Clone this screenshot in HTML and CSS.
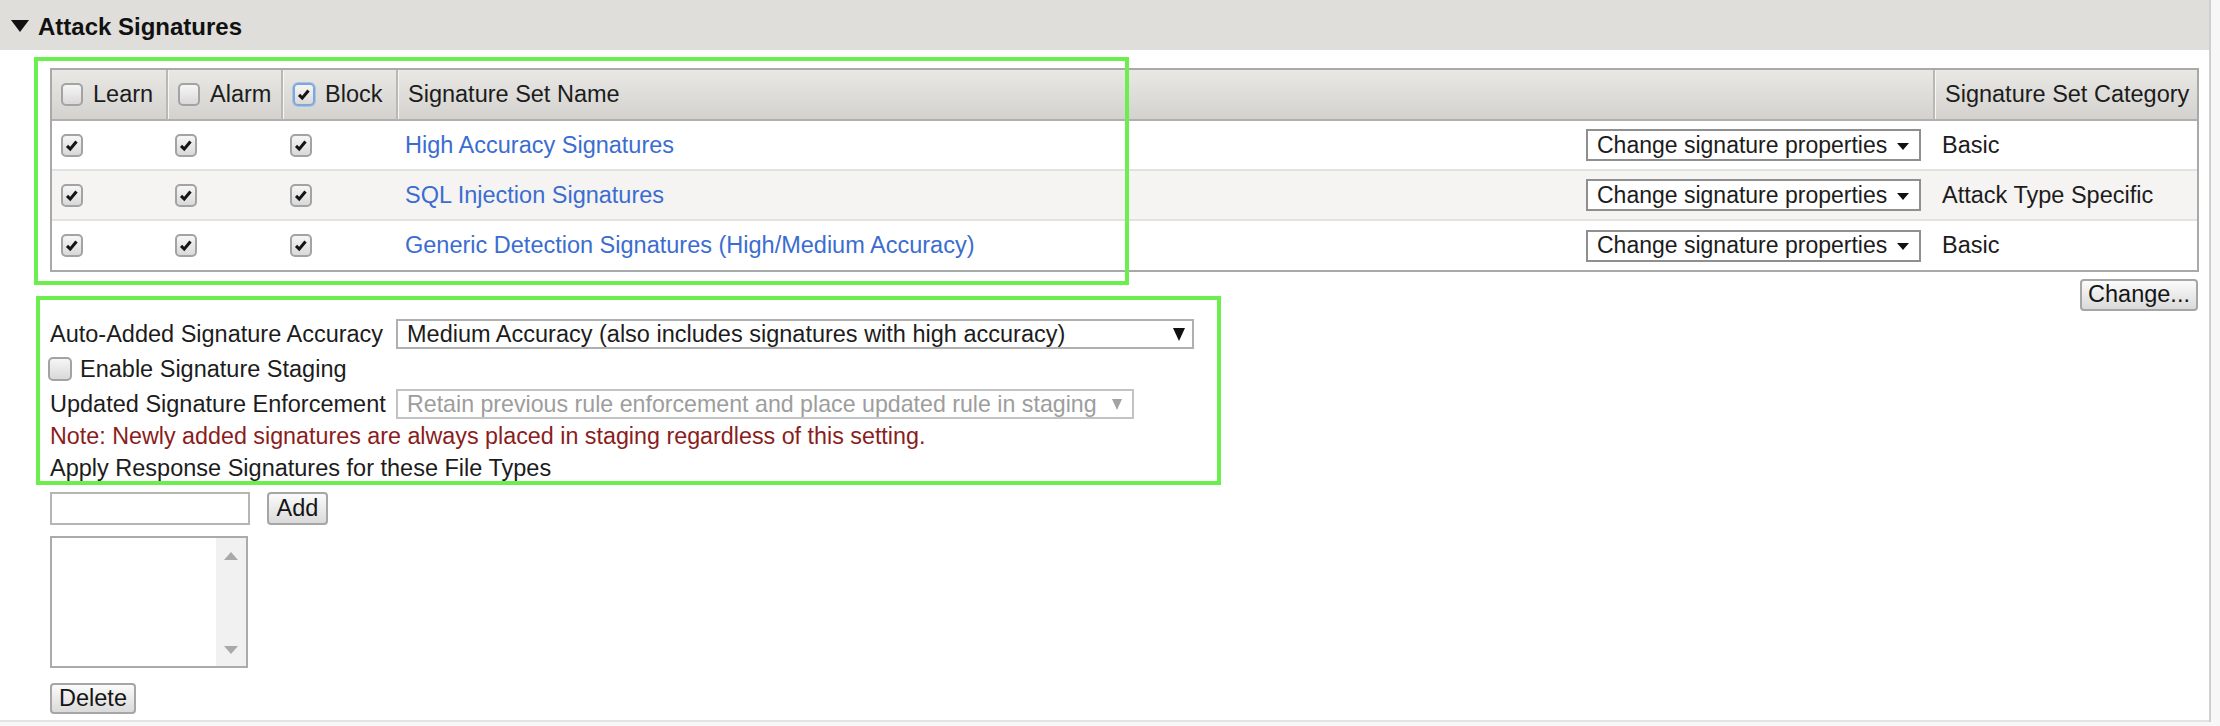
FILE: index.html
```html
<!DOCTYPE html>
<html lang="en">
<head>
<meta charset="utf-8">
<title>Attack Signatures</title>
<link rel="stylesheet" href="styles.css">
</head>
<body>
<div class="page">
  <div class="section-head">
    <span class="caret"></span>
    <span class="title">Attack Signatures</span>
  </div>
  <div class="section-body">
    <table class="sig-table">
      <colgroup>
        <col class="c-learn"><col class="c-alarm"><col class="c-block"><col class="c-name"><col class="c-cat">
      </colgroup>
      <thead>
        <tr>
          <th><span class="cb"></span>Learn</th>
          <th><span class="cb"></span>Alarm</th>
          <th><span class="cb cb-focus"><svg class="tick" viewBox="0 0 20 20"><path d="M4.5 10.5 L8 14 L15 5.5"/></svg></span>Block</th>
          <th>Signature Set Name</th>
          <th>Signature Set Category</th>
        </tr>
      </thead>
      <tbody>
        <tr>
          <td><span class="cb"><svg class="tick" viewBox="0 0 20 20"><path d="M4.5 10.5 L8 14 L15 5.5"/></svg></span></td>
          <td><span class="cb"><svg class="tick" viewBox="0 0 20 20"><path d="M4.5 10.5 L8 14 L15 5.5"/></svg></span></td>
          <td><span class="cb"><svg class="tick" viewBox="0 0 20 20"><path d="M4.5 10.5 L8 14 L15 5.5"/></svg></span></td>
          <td><div class="name-cell"><a class="set-link" href="#">High Accuracy Signatures</a><div class="dropdown dd-props"><span>Change signature properties</span><span class="arrow-sm"></span></div></div></td>
          <td>Basic</td>
        </tr>
        <tr>
          <td><span class="cb"><svg class="tick" viewBox="0 0 20 20"><path d="M4.5 10.5 L8 14 L15 5.5"/></svg></span></td>
          <td><span class="cb"><svg class="tick" viewBox="0 0 20 20"><path d="M4.5 10.5 L8 14 L15 5.5"/></svg></span></td>
          <td><span class="cb"><svg class="tick" viewBox="0 0 20 20"><path d="M4.5 10.5 L8 14 L15 5.5"/></svg></span></td>
          <td><div class="name-cell"><a class="set-link" href="#">SQL Injection Signatures</a><div class="dropdown dd-props"><span>Change signature properties</span><span class="arrow-sm"></span></div></div></td>
          <td>Attack Type Specific</td>
        </tr>
        <tr>
          <td><span class="cb"><svg class="tick" viewBox="0 0 20 20"><path d="M4.5 10.5 L8 14 L15 5.5"/></svg></span></td>
          <td><span class="cb"><svg class="tick" viewBox="0 0 20 20"><path d="M4.5 10.5 L8 14 L15 5.5"/></svg></span></td>
          <td><span class="cb"><svg class="tick" viewBox="0 0 20 20"><path d="M4.5 10.5 L8 14 L15 5.5"/></svg></span></td>
          <td><div class="name-cell"><a class="set-link" href="#">Generic Detection Signatures (High/Medium Accuracy)</a><div class="dropdown dd-props"><span>Change signature properties</span><span class="arrow-sm"></span></div></div></td>
          <td>Basic</td>
        </tr>
      </tbody>
    </table>

    <div class="change-row"><button class="btn btn-change" type="button">Change...</button></div>

    <div class="settings">
      <div class="set-row row-accuracy">
        <span class="set-label">Auto-Added Signature Accuracy</span>
        <div class="dropdown dd-accuracy"><span>Medium Accuracy (also includes signatures with high accuracy)</span><span class="arrow-lg"></span></div>
      </div>
      <div class="set-row row-staging">
        <span class="cb cb-big"></span><span>Enable Signature Staging</span>
      </div>
      <div class="set-row row-enforce">
        <span class="set-label">Updated Signature Enforcement</span>
        <div class="dropdown dd-enforce"><span>Retain previous rule enforcement and place updated rule in staging</span><span class="arrow-dis"></span></div>
      </div>
      <div class="note">Note: Newly added signatures are always placed in staging regardless of this setting.</div>
      <div class="set-row row-apply">Apply Response Signatures for these File Types</div>
    </div>

    <div class="filetypes">
      <div class="add-row">
        <input class="text-in" type="text">
        <button class="btn btn-add" type="button">Add</button>
      </div>
      <div class="listbox">
        <div class="list-scroll">
          <span class="sc-up"></span>
          <span class="sc-down"></span>
        </div>
      </div>
      <button class="btn btn-delete" type="button">Delete</button>
    </div>
  </div>

  <div class="annot annot-1"></div>
  <div class="annot annot-2"></div>
</div>
</body>
</html>
```

FILE: styles.css
```css
* { box-sizing: border-box; }

html, body {
  margin: 0;
  padding: 0;
}

body {
  width: 2220px;
  height: 726px;
  overflow: hidden;
  font-family: "Liberation Sans", Arial, sans-serif;
  font-size: 23.5px;
  color: #1c1c1c;
  background: #f7f7f7;
}

.page {
  position: relative;
  width: 2211px;
  background: #ffffff;
  border-right: 2px solid #cfcfcf;
}

/* section header */
.section-head {
  height: 50px;
  background: #dfdedb;
  display: flex;
  align-items: center;
  padding-left: 11px;
  padding-top: 3px;
}

.caret {
  width: 0;
  height: 0;
  border-left: 9px solid transparent;
  border-right: 9px solid transparent;
  border-top: 12px solid #111;
  margin-right: 9px;
  margin-top: -2px;
}

.title {
  font-weight: bold;
  font-size: 24px;
  color: #111;
}

.section-body {
  padding: 18px 10px 6px 50px;
  border-bottom: 2px solid #e3e3e3;
}

/* table */
.sig-table {
  width: 100%;
  table-layout: fixed;
  border-collapse: separate;
  border-spacing: 0;
  border: 2px solid #a9a9a9;
}

.c-learn { width: 114px; }
.c-alarm { width: 115px; }
.c-block { width: 115px; }
.c-name { width: 1537px; }

.sig-table th {
  height: 51px;
  padding: 0 8px 0 10px;
  text-align: left;
  font-weight: normal;
  white-space: nowrap;
  background: linear-gradient(#e9e8e5, #d3d2ce);
  border-left: 2px solid #b9b8b5;
  border-bottom: 2px solid #b0afac;
  box-shadow: inset 1px 0 0 #f6f6f4;
  vertical-align: middle;
}

.sig-table th:first-child {
  border-left: 0;
  padding-left: 9px;
  box-shadow: none;
}

.sig-table td {
  height: 50px;
  padding: 0 10px 0 9px;
  border-bottom: 2px solid #e2e2e0;
  vertical-align: middle;
  white-space: nowrap;
}

.sig-table tbody tr:last-child td { border-bottom: 0; height: 49px; }
.sig-table tbody tr:nth-child(even) td { background: #f5f4f2; }

/* checkboxes */
.cb {
  display: inline-block;
  width: 22px;
  height: 23px;
  border: 2px solid #a3a3a3;
  border-radius: 5px;
  background: linear-gradient(#f6f6f6, #d9d9d9);
  vertical-align: middle;
  position: relative;
  top: -1px;
}

th .cb { margin-right: 10px; }

.cb-focus {
  border-color: #7fa7d9;
  box-shadow: 0 0 0 1px #a9c4e8;
}

.tick {
  display: block;
  width: 18px;
  height: 19px;
}

.tick path {
  fill: none;
  stroke: #141414;
  stroke-width: 3.4;
  stroke-linecap: butt;
  stroke-linejoin: miter;
}

.cb-big {
  width: 24px;
  height: 24px;
  margin-left: -2px;
  margin-right: 8px;
}

/* name cell */
.name-cell {
  display: flex;
  align-items: center;
  justify-content: space-between;
}

.set-link {
  color: #3b6dd1;
  text-decoration: none;
}

/* dropdowns */
.dropdown {
  display: flex;
  align-items: center;
  background: #fff;
  white-space: nowrap;
}

.dd-props {
  width: 335px;
  height: 32px;
  margin-right: 2px;
  border: 2px solid #8f8f8f;
  padding: 0 10px 0 9px;
  font-size: 23px;
  justify-content: space-between;
}

.arrow-sm {
  width: 0;
  height: 0;
  border-left: 6px solid transparent;
  border-right: 6px solid transparent;
  border-top: 7px solid #111;
  margin-top: 2px;
}

.dd-accuracy {
  width: 798px;
  height: 30px;
  border: 2px solid #b0b0b0;
  padding: 0 7px 0 9px;
  justify-content: space-between;
}

.arrow-lg {
  width: 0;
  height: 0;
  border-left: 6px solid transparent;
  border-right: 6px solid transparent;
  border-top: 13px solid #111;
}

.dd-enforce {
  width: 738px;
  height: 30px;
  border: 2px solid #c3c3c3;
  padding: 0 10px 0 9px;
  font-size: 23.2px;
  color: #9d9d9d;
  justify-content: space-between;
}

.arrow-dis {
  width: 0;
  height: 0;
  border-left: 5px solid transparent;
  border-right: 5px solid transparent;
  border-top: 11px solid #a3a3a3;
}

/* change button row */
.change-row {
  display: flex;
  justify-content: flex-end;
  margin-top: 7px;
  padding-right: 1px;
}

.btn {
  font-family: "Liberation Sans", Arial, sans-serif;
  font-size: 23.5px;
  color: #151515;
  background: linear-gradient(#fbfbfb, #dadada);
  border: 2px solid #a6a6a6;
  border-radius: 4px;
  padding: 0;
  line-height: 1;
}

.btn-change { width: 118px; height: 32px; }

/* settings block */
.settings { margin-top: 6px; }

.set-row {
  display: flex;
  align-items: center;
  height: 34px;
}

.row-staging { height: 37px; }
.row-enforce { height: 32px; }

.set-label { width: 346px; flex: none; }

.note {
  color: #8a1d1d;
  font-size: 23.3px;
  line-height: 20px;
  height: 20px;
  margin-top: 6px;
}

.row-apply { margin-top: 5px; }

/* file types */
.filetypes { margin-top: 7px; }

.add-row {
  display: flex;
  gap: 17px;
}

.text-in {
  width: 200px;
  height: 33px;
  border: 2px solid #b5b5b5;
  background: #fff;
  margin: 0;
  font-size: 23px;
}

.btn-add { width: 61px; height: 33px; }

.listbox {
  margin-top: 11px;
  width: 198px;
  height: 132px;
  border: 2px solid #ababab;
  background: #fff;
  display: flex;
  justify-content: flex-end;
}

.list-scroll {
  width: 30px;
  background: #f1f1f1;
  display: flex;
  flex-direction: column;
  align-items: center;
  justify-content: space-between;
  padding: 14px 0 12px;
}

.sc-up {
  width: 0;
  height: 0;
  border-left: 7px solid transparent;
  border-right: 7px solid transparent;
  border-bottom: 8px solid #a9a9a9;
}

.sc-down {
  width: 0;
  height: 0;
  border-left: 7px solid transparent;
  border-right: 7px solid transparent;
  border-top: 8px solid #a9a9a9;
}

.btn-delete {
  display: block;
  margin-top: 15px;
  width: 86px;
  height: 31px;
}

/* annotation overlays */
.annot {
  position: absolute;
  border: 4px solid #6bef4f;
  pointer-events: none;
}

.annot-1 { left: 34px; top: 57px; width: 1095px; height: 228px; }
.annot-2 { left: 36px; top: 296px; width: 1185px; height: 189px; }
```
